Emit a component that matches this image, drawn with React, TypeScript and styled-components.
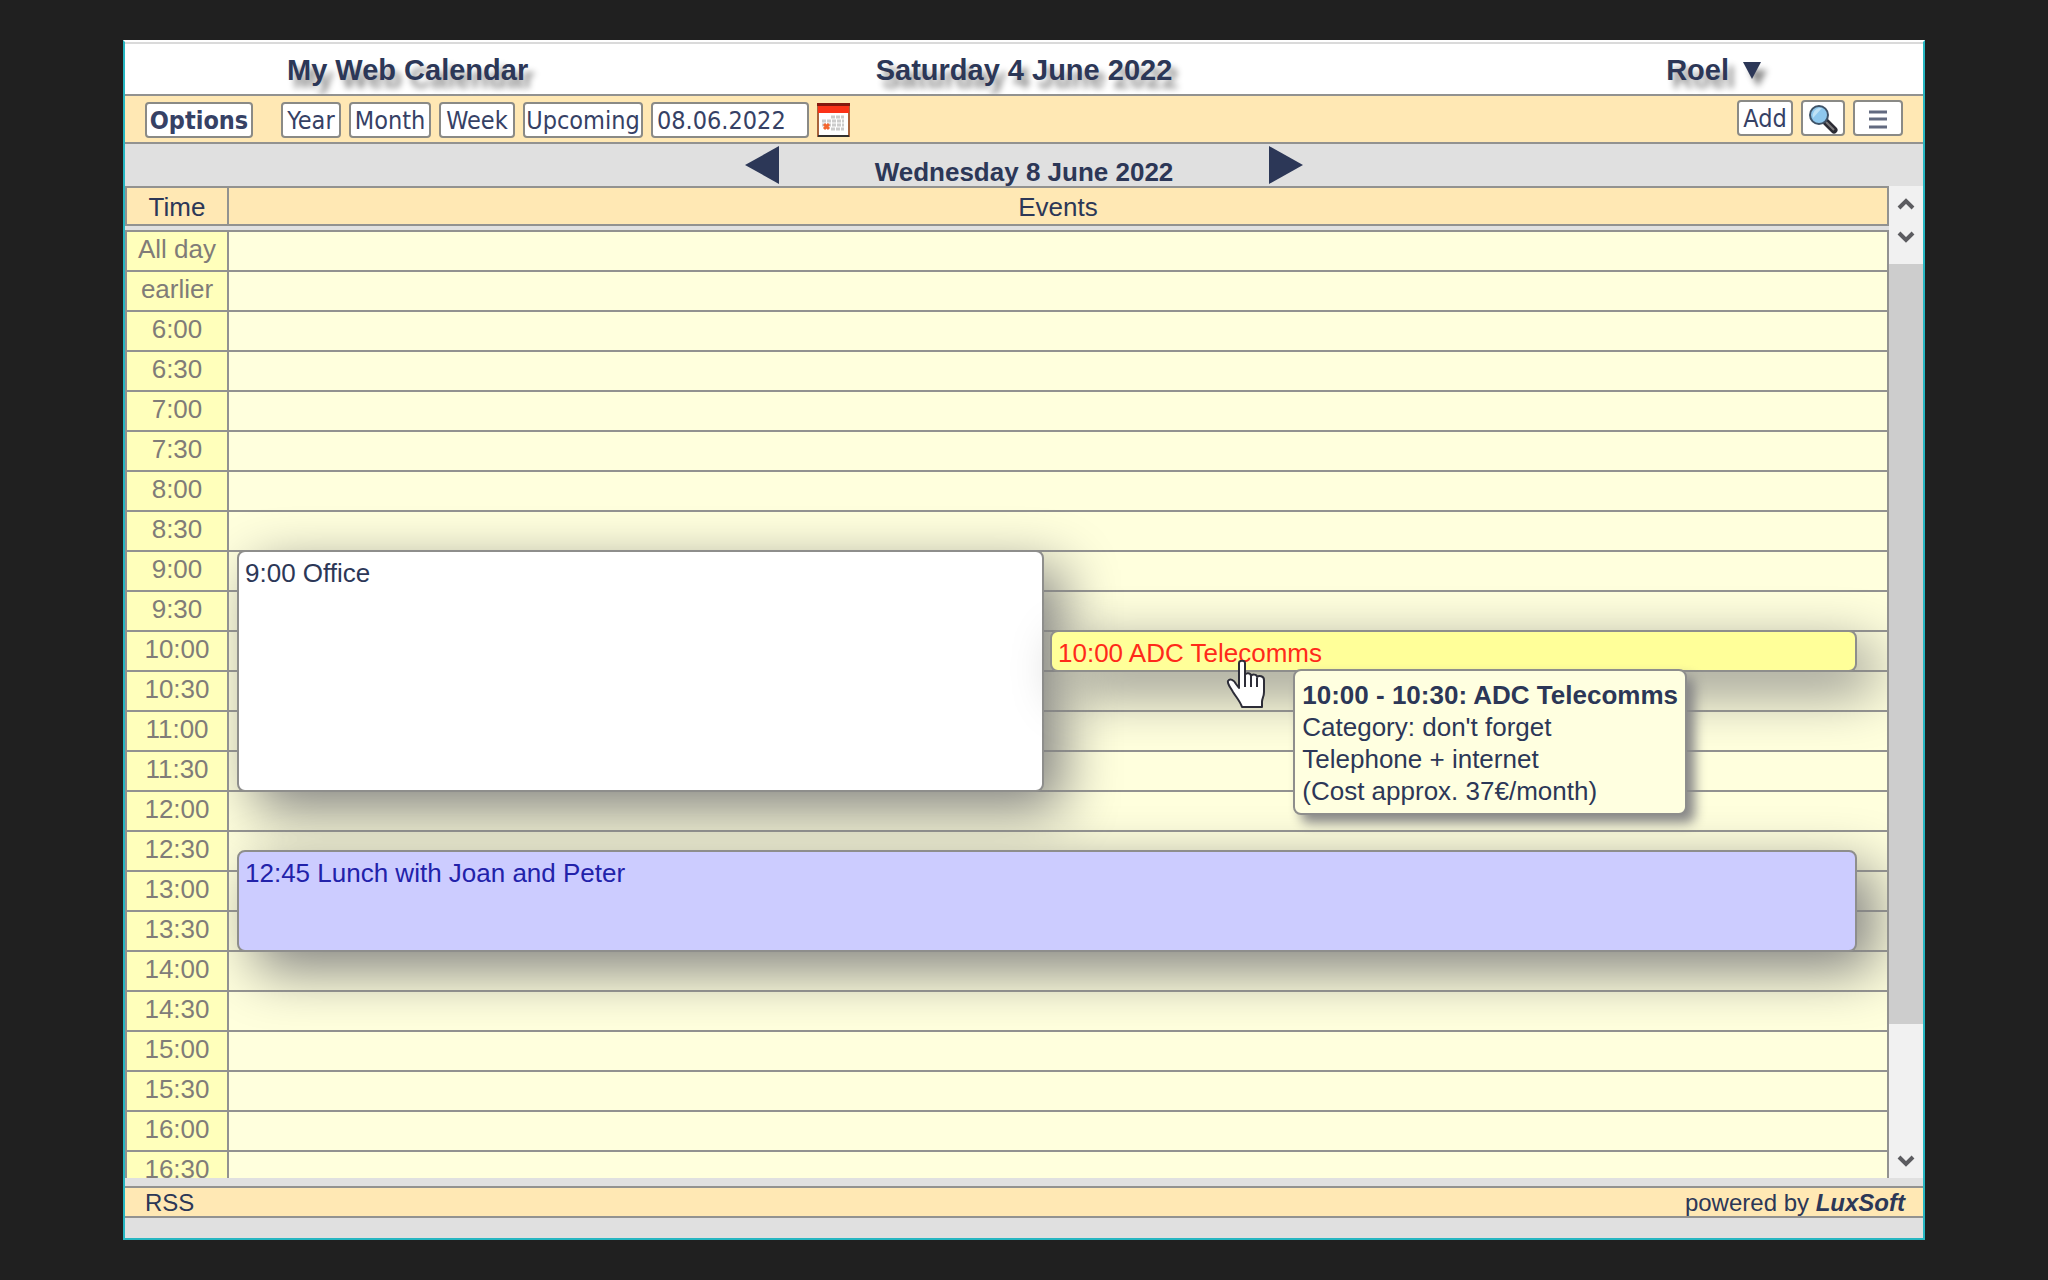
import React from 'react';
import styled, { createGlobalStyle } from 'styled-components';

const navy = '#2c3757';
const line = '#929290';
const cream = '#ffe8b4';
const sans = '"Liberation Sans", Arial, sans-serif';
const ui = '"DejaVu Sans Condensed", "DejaVu Sans", Tahoma, sans-serif';

const GlobalStyle = createGlobalStyle`
  *, *::before, *::after { box-sizing: border-box; }
  body { margin: 0; background: #202020; color: ${navy}; font: 26px/32px ${sans}; }
  button, input { font: inherit; color: inherit; margin: 0; }
  button { cursor: pointer; }
`;

const Page = styled.div`
  height: 100vh;
  padding: 40px 123px;
`;

const Frame = styled.main`
  display: flex;
  flex-direction: column;
  height: 100%;
  background: #e0e0e0;
  border: 2px solid #26b6c1;
  border-top: 2px solid #ffffff;
`;

const TitleBar = styled.header`
  display: grid;
  grid-template-columns: 1fr auto 1fr;
  align-items: center;
  height: 54px;
  padding: 2px 162px 0;
  background: #ffffff;
  border-top: 2px solid #dadada;
  border-bottom: 2px solid ${line};
  font-size: 29px;
  font-weight: bold;
  text-shadow: 6px 8px 6px #8c8c8c;
`;

const Title = styled.h1`
  margin: 0;
  font-size: inherit;
`;

const UserButton = styled.button`
  justify-self: end;
  display: flex;
  align-items: center;
  gap: 14px;
  padding: 0;
  border: 0;
  background: none;
  font-weight: bold;
  text-shadow: inherit;

  svg { filter: drop-shadow(6px 8px 3px #8c8c8c); }
`;

const Toolbar = styled.nav`
  display: flex;
  justify-content: space-between;
  height: 48px;
  padding: 0 20px;
  background: ${cream};
  border-bottom: 2px solid ${line};
  color: #364165;
  font-family: ${ui};
  font-size: 25px;
`;

const ToolGroup = styled.div<{ $top: number }>`
  display: flex;
  align-items: center;
  align-self: flex-start;
  gap: 8px;
  padding-top: ${(p) => p.$top}px;
`;

const ToolButton = styled.button<{ $width: number; $strong?: boolean }>`
  display: flex;
  align-items: center;
  justify-content: center;
  width: ${(p) => p.$width}px;
  height: 36px;
  margin-right: ${(p) => (p.$strong ? 20 : 0)}px;
  padding: 2px 0 0;
  background: #ffffff;
  border: 2px solid #8a8a86;
  border-radius: 4px;
  font-weight: ${(p) => (p.$strong ? 'bold' : 'normal')};
`;

const DateInput = styled.input`
  width: 158px;
  height: 36px;
  padding: 1px 4px 0;
  background: #ffffff;
  border: 2px solid #8a8a86;
  border-radius: 4px;
`;

const IconButton = styled.button`
  display: flex;
  padding: 0;
  border: 0;
  background: none;
`;

const DayBar = styled.div`
  display: flex;
  justify-content: center;
  height: 42px;
`;

const DayNav = styled.div`
  display: flex;
  justify-content: space-between;
  width: 558px;
  padding-top: 2px;
`;

const DayTitle = styled.h2`
  align-self: flex-end;
  margin: 0;
  font-size: 26px;
  line-height: 28px;
`;

const Main = styled.section`
  display: flex;
  flex: 1;
  min-height: 0;
`;

const Schedule = styled.div`
  display: flex;
  flex-direction: column;
  flex: 1;
  min-width: 0;
`;

const Table = styled.table`
  width: 100%;
  table-layout: fixed;
  border-collapse: separate;
  border-spacing: 0;

  th, td {
    padding: 1px 0 0;
    border: 0 solid ${line};
    border-right-width: 2px;
    font-weight: normal;
  }

  th:first-child {
    width: 104px;
    border-left-width: 2px;
  }
`;

const HeadTable = styled(Table)`
  margin-bottom: 4px;
  background: ${cream};

  th {
    height: 40px;
    border-top-width: 2px;
    border-bottom-width: 2px;
  }
`;

const Viewport = styled.div`
  position: relative;
  flex: 1;
  min-height: 0;
  overflow: hidden;
`;

const BodyTable = styled(Table)`
  th, td {
    height: 40px;
    border-top-width: 2px;
    vertical-align: top;
  }
  th { background: #ffffbb; color: #807c78; }
  td { background: #ffffdd; }
`;

const EventLayer = styled.div`
  position: absolute;
  inset: 0 2px 0 104px;
  display: grid;
  grid-template-columns: 1fr 1fr;
  grid-template-rows: repeat(48, 20px);
  column-gap: 6px;
  padding: 0 30px 0 8px;
  overflow: hidden;
`;

const EventBox = styled.article<{ $cols: string; $rows: string; $bg: string; $ink: string }>`
  grid-column: ${(p) => p.$cols};
  grid-row: ${(p) => p.$rows};
  margin-bottom: -2px;
  padding: 5px 6px 0;
  background: ${(p) => p.$bg};
  color: ${(p) => p.$ink};
  border: 2px solid #8e8e8c;
  border-radius: 8px;
  box-shadow: 18px 18px 56px #808080;
`;

const Tooltip = styled.div`
  position: absolute;
  top: 439px;
  right: 202px;
  padding: 8px 7px 6px;
  background: #ffffe0;
  border: 2px solid #8e8e8c;
  border-radius: 8px;
  box-shadow: 8px 8px 12px #888888;
  white-space: nowrap;
`;

const Pointer = styled.svg`
  position: absolute;
  top: 430px;
  right: 623px;
`;

const Scrollbar = styled.div`
  display: flex;
  flex-direction: column;
  width: 34px;
  background: #f1f1f1;
`;

const ScrollButton = styled.button`
  display: flex;
  align-items: center;
  justify-content: center;
  height: 34px;
  padding: 0;
  border: 0;
  background: none;
`;

const Thumb = styled.div`
  flex: 760;
  margin-top: 10px;
  background: #cdcdcd;
`;

const Track = styled.div`
  flex: 120;
`;

const Footer = styled.footer`
  display: flex;
  align-items: center;
  justify-content: space-between;
  height: 32px;
  margin: 8px 0 20px;
  padding: 2px 18px 0 20px;
  background: ${cream};
  border: solid ${line};
  border-width: 2px 0;
  font-size: 24px;
  line-height: 28px;

  a { color: inherit; text-decoration: none; }
`;

const Brand = styled.a`
  font-weight: bold;
  font-style: italic;
`;

const slots = ['All day', 'earlier'];
for (let h = 6; h <= 16; h++) slots.push(`${h}:00`, `${h}:30`);

const Chevron = ({ up = false }: { up?: boolean }) => (
  <svg width="18" height="13" viewBox="0 0 18 13">
    <path d={up ? 'M2 11l7-7 7 7' : 'M2 2l7 7 7-7'} fill="none" stroke="#5c5c60" strokeWidth="4" />
  </svg>
);

const CalendarIcon = () => (
  <svg width="33" height="34" viewBox="0 0 33 34">
    <rect x="1" y="1" width="31" height="32" fill="#fff" stroke="#a8643c" strokeWidth="2" />
    <path d="M1 2h31v8H1z" fill="#fb3218" />
    <path d="M0 0h33v3H0z" fill="#84180f" />
    <path d="M1 33h31" stroke="#33302e" strokeWidth="2" />
    <path d="M14 14h13M5 18h22M5 22h22M14 26h13" stroke="#cccccc" strokeWidth="3" strokeDasharray="4 1" />
    <path d="M7 21l5 5M12 21l-5 5" stroke="#f4662e" strokeWidth="3" />
  </svg>
);

const SearchIcon = () => (
  <svg width="30" height="30" viewBox="0 0 30 30">
    <path d="M18 18l8 8" stroke="#2b2b33" strokeWidth="7" strokeLinecap="round" />
    <path d="M18 18l8 8" stroke="#7d7b7c" strokeWidth="2" />
    <circle cx="11" cy="11" r="9" fill="#8ec8ee" stroke="#3f5368" strokeWidth="2" />
    <path d="M5 14L14 4a8 8 0 0 0-9 10z" fill="#bfe2f6" />
  </svg>
);

export default function App() {
  return (
    <Page>
      <GlobalStyle />
      <Frame>
        <TitleBar>
          <Title>My Web Calendar</Title>
          <span>Saturday 4 June 2022</span>
          <UserButton type="button">
            Roel
            <svg width="18" height="17" viewBox="0 0 18 17"><path d="M0 0h18L9 17z" fill={navy} /></svg>
          </UserButton>
        </TitleBar>

        <Toolbar>
          <ToolGroup $top={6}>
            <ToolButton type="button" $width={108} $strong>Options</ToolButton>
            <ToolButton type="button" $width={60}>Year</ToolButton>
            <ToolButton type="button" $width={82}>Month</ToolButton>
            <ToolButton type="button" $width={76}>Week</ToolButton>
            <ToolButton type="button" $width={120}>Upcoming</ToolButton>
            <DateInput aria-label="Date" defaultValue="08.06.2022" />
            <IconButton type="button" aria-label="Pick a date"><CalendarIcon /></IconButton>
          </ToolGroup>
          <ToolGroup $top={4}>
            <ToolButton type="button" $width={56}>Add</ToolButton>
            <ToolButton type="button" $width={44} aria-label="Search"><SearchIcon /></ToolButton>
            <ToolButton type="button" $width={50} aria-label="Menu">
              <svg width="18" height="19" viewBox="0 0 18 19">
                <path d="M0 2h18M0 9h18M0 17h18" stroke="#626a80" strokeWidth="3" />
              </svg>
            </ToolButton>
          </ToolGroup>
        </Toolbar>

        <DayBar>
          <DayNav>
            <IconButton type="button" aria-label="Previous day">
              <svg width="34" height="38" viewBox="0 0 34 38"><path d="M34 0v38L0 19z" fill={navy} /></svg>
            </IconButton>
            <DayTitle>Wednesday 8 June 2022</DayTitle>
            <IconButton type="button" aria-label="Next day">
              <svg width="34" height="38" viewBox="0 0 34 38"><path d="M0 0v38l34-19z" fill={navy} /></svg>
            </IconButton>
          </DayNav>
        </DayBar>

        <Main>
          <Schedule>
            <HeadTable>
              <thead>
                <tr><th scope="col">Time</th><th scope="col">Events</th></tr>
              </thead>
            </HeadTable>
            <Viewport>
              <BodyTable>
                <tbody>
                  {slots.map((slot) => (
                    <tr key={slot}><th scope="row">{slot}</th><td /></tr>
                  ))}
                </tbody>
              </BodyTable>
              <EventLayer>
                <EventBox $cols="1" $rows="17 / 29" $bg="#ffffff" $ink={navy}>9:00 Office</EventBox>
                <EventBox $cols="2" $rows="21 / 23" $bg="#ffff99" $ink="#ff2a1a">10:00 ADC Telecomms</EventBox>
                <EventBox $cols="1 / 3" $rows="32 / 37" $bg="#ccccff" $ink="#2222aa">12:45 Lunch with Joan and Peter</EventBox>
              </EventLayer>
              <Tooltip role="tooltip">
                <strong>10:00 - 10:30: ADC Telecomms</strong><br />
                Category: don't forget<br />
                Telephone + internet<br />
                (Cost approx. 37€/month)
              </Tooltip>
              <Pointer width="40" height="50" viewBox="0 0 40 50">
                <path
                  d="M13 3c0-3 6-3 6 0v12c1-3 6-2 6 1 1-2 6-2 6 1 2-2 7-1 7 3v12c0 5-2 6-2 10v5H16c-2-6-6-10-9-15-2-4-6-8-5-11 2-3 6-1 8 3l3 4z"
                  fill="#fff" stroke="#2d2d38" strokeWidth="2" strokeLinejoin="round"
                />
                <path d="M19 15v12M25 16v11M31 18v9" stroke="#2d2d38" strokeWidth="2" />
              </Pointer>
            </Viewport>
          </Schedule>
          <Scrollbar>
            <ScrollButton type="button" aria-label="Scroll up"><Chevron up /></ScrollButton>
            <ScrollButton type="button" aria-label="Scroll down one row"><Chevron /></ScrollButton>
            <Thumb />
            <Track />
            <ScrollButton type="button" aria-label="Scroll down"><Chevron /></ScrollButton>
          </Scrollbar>
        </Main>

        <Footer>
          <a href="#rss">RSS</a>
          <span>powered by <Brand href="#luxsoft">LuxSoft</Brand></span>
        </Footer>
      </Frame>
    </Page>
  );
}
